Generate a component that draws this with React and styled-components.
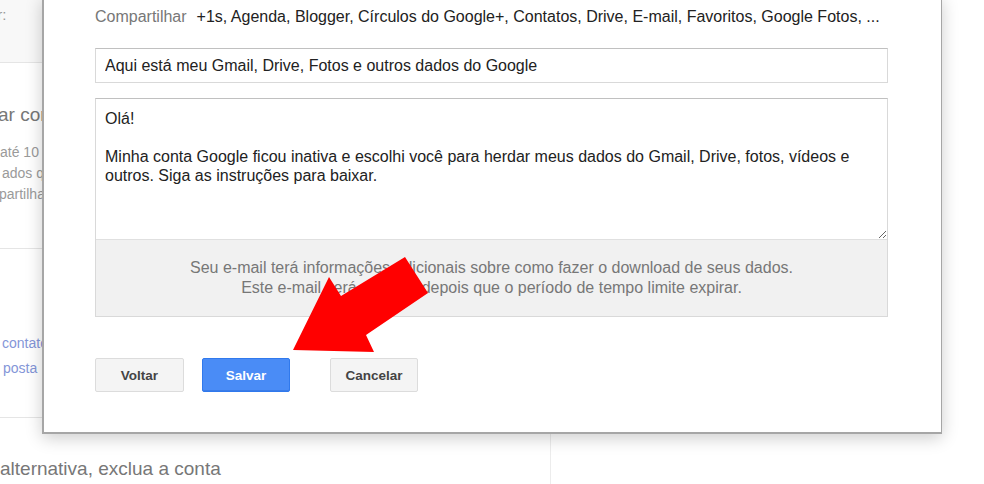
import React from 'react';
import styled, { createGlobalStyle } from 'styled-components';

const Global = createGlobalStyle`
  html, body {
    margin: 0;
    padding: 0;
    background: #fff;
    overflow: hidden;
  }
  body {
    font-family: "Liberation Sans", Arial, sans-serif;
    width: 984px;
    height: 484px;
  }
`;

const Screen = styled.div`
  position: relative;
  width: 984px;
  height: 484px;
  overflow: hidden;
`;

/* page behind the dialog */
const Page = styled.div`
  display: flex;
  height: 100%;
`;

const MainCol = styled.div`
  width: 550px;
  border-right: 1px solid #ececec;
  display: flex;
  flex-direction: column;
`;

const Section = styled.div`
  height: ${(p) => p.h}px;
  background: ${(p) => p.bg || '#fff'};
  border-bottom: ${(p) => (p.noLine ? 'none' : '1px solid #e5e5e5')};
  padding-top: ${(p) => p.pt || 0}px;
  box-sizing: border-box;
  display: flex;
  flex-direction: column;
`;

const FadedLabel = styled.div`
  font-size: ${(p) => p.size || 14}px;
  line-height: ${(p) => p.lh || 21}px;
  color: ${(p) => p.color || '#9a9a9a'};
  white-space: nowrap;
  margin-left: ${(p) => p.ml || 0}px;
  margin-bottom: ${(p) => p.mb || 0}px;
`;

const LinkText = styled(FadedLabel)`
  color: #8496d8;
`;

/* dialog */
const Dialog = styled.div`
  position: absolute;
  left: 42px;
  top: -4px;
  width: 900px;
  height: 438px;
  background: #fff;
  border: 1px solid #a6a6a6;
  border-left-width: 2px;
  border-bottom-width: 2px;
  box-shadow: 0 4px 16px rgba(0, 0, 0, 0.2);
  padding: 10px 0 0 51px;
  box-sizing: border-box;
  display: flex;
  flex-direction: column;
`;

const ShareRow = styled.div`
  display: flex;
  gap: 10px;
  font-size: 16px;
  line-height: 20px;
  white-space: nowrap;
`;

const ShareLabel = styled.span`
  color: #777;
`;

const ShareList = styled.span`
  color: #222;
`;

const Field = styled.input`
  width: 793px;
  height: 35px;
  box-sizing: border-box;
  margin-top: 21px;
  border: 1px solid #d9d9d9;
  border-top-color: #c0c0c0;
  padding: 0 9px;
  font-family: "Liberation Sans", Arial, sans-serif;
  font-size: 16px;
  color: #222;
  outline: none;
`;

const MessageBox = styled.div`
  width: 793px;
  margin-top: 15px;
  border: 1px solid #d9d9d9;
  border-top-color: #c0c0c0;
  box-sizing: border-box;
  display: flex;
  flex-direction: column;
`;

const Body = styled.textarea`
  display: block;
  width: 100%;
  height: 141px;
  box-sizing: border-box;
  border: none;
  border-bottom: 1px solid #e0e0e0;
  padding: 10px 9px;
  font-family: "Liberation Sans", Arial, sans-serif;
  font-size: 16px;
  line-height: 19px;
  color: #222;
  outline: none;
  resize: vertical;
`;

const Notice = styled.div`
  height: 76px;
  background: #f1f1f1;
  box-sizing: border-box;
  padding-top: 18px;
  text-align: center;
  font-size: 16px;
  line-height: 20px;
  color: #777;
`;

const ButtonRow = styled.div`
  display: flex;
  margin-top: 41px;
`;

const Button = styled.button`
  height: 34px;
  width: ${(p) => p.w}px;
  margin-right: ${(p) => p.mr || 0}px;
  border-radius: 2px;
  font-family: "Liberation Sans", Arial, sans-serif;
  font-weight: bold;
  font-size: 13.5px;
  cursor: pointer;
  border: 1px solid ${(p) => (p.primary ? '#3079ed' : '#dcdcdc')};
  background: ${(p) => (p.primary ? '#4a8cf6' : '#f4f4f4')};
  color: ${(p) => (p.primary ? '#fff' : '#444')};
  box-shadow: ${(p) => (p.primary ? 'inset 0 -1px 0 #3b7de8' : 'none')};
`;

const Arrow = styled.svg`
  position: absolute;
  left: 280px;
  top: 250px;
  width: 160px;
  height: 110px;
  overflow: visible;
`;

export default function App() {
  return (
    <Screen>
      <Global />
      <Page>
        <MainCol>
          <Section h={63} bg="#f8f8f8" pt={4}>
            <FadedLabel size={15} color="#9a9a9a" ml={-66}>Enviar por:</FadedLabel>
          </Section>
          <Section h={186} pt={40}>
            <FadedLabel size={19} lh={24} color="#777" ml={-2} mb={15}>ar contatos confiáveis</FadedLabel>
            <FadedLabel ml={0}>até 10 pessoas</FadedLabel>
            <FadedLabel ml={2}>ados que deseja</FadedLabel>
            <FadedLabel ml={-1}>partilhar</FadedLabel>
          </Section>
          <Section h={169} pt={84}>
            <LinkText ml={2} mb={4}>contatos</LinkText>
            <LinkText ml={3}>posta</LinkText>
          </Section>
          <Section h={66} pt={39} noLine>
            <FadedLabel size={19} lh={24} color="#777" ml={0}>alternativa, exclua a conta</FadedLabel>
          </Section>
        </MainCol>
      </Page>

      <Dialog>
        <ShareRow>
          <ShareLabel>Compartilhar</ShareLabel>
          <ShareList>
            +1s, Agenda, Blogger, Círculos do Google+, Contatos, Drive, E-mail, Favoritos, Google Fotos, ...
          </ShareList>
        </ShareRow>
        <Field readOnly defaultValue="Aqui está meu Gmail, Drive, Fotos e outros dados do Google" />
        <MessageBox>
          <Body
            readOnly
            defaultValue={
              'Olá!\n\nMinha conta Google ficou inativa e escolhi você para herdar meus dados do Gmail, Drive, fotos, vídeos e outros. Siga as instruções para baixar.'
            }
          />
          <Notice>
            Seu e-mail terá informações adicionais sobre como fazer o download de seus dados.
            <br />
            Este e-mail será enviado depois que o período de tempo limite expirar.
          </Notice>
        </MessageBox>
        <ButtonRow>
          <Button w={89} mr={18}>Voltar</Button>
          <Button w={88} mr={40} primary>Salvar</Button>
          <Button w={88}>Cancelar</Button>
        </ButtonRow>
      </Dialog>

      <Arrow viewBox="0 0 160 110">
        <polygon
          points="13,100 49,27 61,46 125,7 148,43 86,85 94,102"
          fill="#ff0000"
        />
      </Arrow>
    </Screen>
  );
}
